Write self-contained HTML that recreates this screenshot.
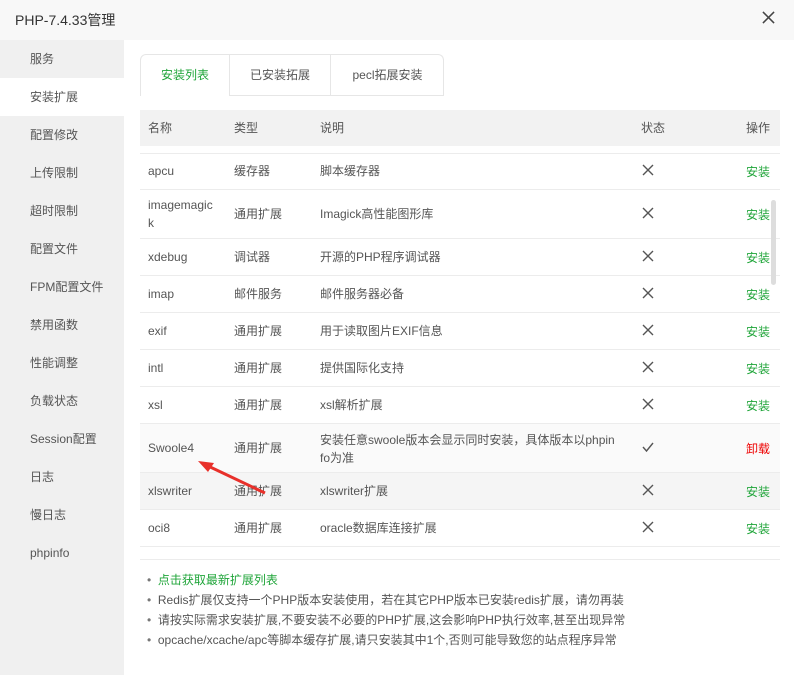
<!DOCTYPE html>
<html><head><meta charset="utf-8"><style>
*{margin:0;padding:0;box-sizing:border-box}
body{width:794px;height:675px;background:#fff;font-family:"Liberation Sans","Noto Sans CJK SC",sans-serif;font-size:12px;color:#555;position:relative;overflow:hidden}
.title{position:absolute;left:0;top:0;width:794px;height:40px;background:#f8f8f8;font-size:14px;color:#333;line-height:40px;padding-left:15px}
.close{position:absolute;left:762px;top:11px;width:13px;height:13px}
.side{position:absolute;left:0;top:40px;width:124px;height:635px;background:#f0f0f0}
.side div{position:absolute;left:0;width:124px;height:38px;line-height:38px;padding-left:30px;color:#555}
.side .act{background:#fff}
.tabs{position:absolute;left:140px;top:54px;width:304px;height:42px;border:1px solid #e6e6e6;border-bottom:none;border-radius:6px 6px 0 0}
.tab{position:absolute;top:0;height:41px;line-height:40px;text-align:center;color:#555;font-size:12px}
.abs{position:absolute}
.hdr{position:absolute;left:140px;top:110px;width:640px;height:36px;background:#f2f2f2}
.line{position:absolute;left:140px;width:640px;height:1px;background:#ececec}
.c{position:absolute;white-space:nowrap;line-height:16px;height:16px}
.c2{line-height:18px;height:36px}
.g{color:#20a53a}.r{color:#e00}
.x{position:absolute;left:642px;width:12px;height:12px}
</style></head><body>
<div class="title">PHP-7.4.33管理</div>
<svg class="close" viewBox="0 0 14 14"><path d="M1 1L13 13M13 1L1 13" stroke="#444" stroke-width="1.6"/></svg>
<div class="side">
<div style="top:0">服务</div>
<div class="act" style="top:38px">安装扩展</div>
<div style="top:76px">配置修改</div>
<div style="top:114px">上传限制</div>
<div style="top:152px">超时限制</div>
<div style="top:190px">配置文件</div>
<div style="top:228px">FPM配置文件</div>
<div style="top:266px">禁用函数</div>
<div style="top:304px">性能调整</div>
<div style="top:342px">负载状态</div>
<div style="top:380px">Session配置</div>
<div style="top:418px">日志</div>
<div style="top:456px">慢日志</div>
<div style="top:494px">phpinfo</div>
</div>
<div class="tabs">
<div class="tab g" style="left:0;width:88px">安装列表</div>
<div class="tab" style="left:88px;width:101px;border-left:1px solid #e6e6e6;border-bottom:1px solid #e6e6e6">已安装拓展</div>
<div class="tab" style="left:189px;width:114px;border-left:1px solid #e6e6e6;border-bottom:1px solid #e6e6e6">pecl拓展安装</div>
</div>
<div class="hdr"></div>
<div class="c" style="left:148px;top:120px">名称</div>
<div class="c" style="left:234px;top:120px">类型</div>
<div class="c" style="left:320px;top:120px">说明</div>
<div class="c" style="left:641px;top:120px">状态</div>
<div class="c" style="left:746px;top:120px">操作</div>
<div class="line" style="top:153px"></div>
<div class="line" style="top:189px"></div>
<div class="line" style="top:238px"></div>
<div class="line" style="top:275px"></div>
<div class="line" style="top:312px"></div>
<div class="line" style="top:349px"></div>
<div class="line" style="top:386px"></div>
<div class="line" style="top:423px"></div>
<div class="abs" style="left:140px;top:424px;width:640px;height:48px;background:#fafafa"></div>
<div class="abs" style="left:140px;top:473px;width:640px;height:36px;background:#f5f5f5"></div>
<div class="line" style="top:472px"></div>
<div class="line" style="top:509px"></div>
<div class="line" style="top:546px"></div>
<div class="line" style="top:559px"></div>
<div class="abs" style="left:771px;top:200px;width:5px;height:85px;background:#ddd;border-radius:3px"></div>

<div class="c" style="left:148px;top:163px">apcu</div><div class="c" style="left:234px;top:163px">缓存器</div><div class="c" style="left:320px;top:163px">脚本缓存器</div><div class="c g" style="left:746px;top:164px">安装</div>
<div class="c c2" style="left:148px;top:196px">imagemagic<br>k</div><div class="c" style="left:234px;top:206px">通用扩展</div><div class="c" style="left:320px;top:206px">Imagick高性能图形库</div><div class="c g" style="left:746px;top:207px">安装</div>
<div class="c" style="left:148px;top:249px">xdebug</div><div class="c" style="left:234px;top:249px">调试器</div><div class="c" style="left:320px;top:249px">开源的PHP程序调试器</div><div class="c g" style="left:746px;top:250px">安装</div>
<div class="c" style="left:148px;top:286px">imap</div><div class="c" style="left:234px;top:286px">邮件服务</div><div class="c" style="left:320px;top:286px">邮件服务器必备</div><div class="c g" style="left:746px;top:287px">安装</div>
<div class="c" style="left:148px;top:323px">exif</div><div class="c" style="left:234px;top:323px">通用扩展</div><div class="c" style="left:320px;top:323px">用于读取图片EXIF信息</div><div class="c g" style="left:746px;top:324px">安装</div>
<div class="c" style="left:148px;top:360px">intl</div><div class="c" style="left:234px;top:360px">通用扩展</div><div class="c" style="left:320px;top:360px">提供国际化支持</div><div class="c g" style="left:746px;top:361px">安装</div>
<div class="c" style="left:148px;top:397px">xsl</div><div class="c" style="left:234px;top:397px">通用扩展</div><div class="c" style="left:320px;top:397px">xsl解析扩展</div><div class="c g" style="left:746px;top:398px">安装</div>
<div class="c" style="left:148px;top:440px">Swoole4</div><div class="c" style="left:234px;top:440px">通用扩展</div><div class="c c2" style="left:320px;top:431px">安装任意swoole版本会显示同时安装，具体版本以phpin<br>fo为准</div><div class="c r" style="left:746px;top:441px">卸载</div>
<div class="c" style="left:148px;top:483px">xlswriter</div><div class="c" style="left:234px;top:483px">通用扩展</div><div class="c" style="left:320px;top:483px">xlswriter扩展</div><div class="c g" style="left:746px;top:484px">安装</div>
<div class="c" style="left:148px;top:520px">oci8</div><div class="c" style="left:234px;top:520px">通用扩展</div><div class="c" style="left:320px;top:520px">oracle数据库连接扩展</div><div class="c g" style="left:746px;top:521px">安装</div>

<svg class="x" style="top:164px" viewBox="0 0 12 12"><path d="M1 1L11 11M11 1L1 11" stroke="#555" stroke-width="1.4"/></svg>
<svg class="x" style="top:207px" viewBox="0 0 12 12"><path d="M1 1L11 11M11 1L1 11" stroke="#555" stroke-width="1.4"/></svg>
<svg class="x" style="top:250px" viewBox="0 0 12 12"><path d="M1 1L11 11M11 1L1 11" stroke="#555" stroke-width="1.4"/></svg>
<svg class="x" style="top:287px" viewBox="0 0 12 12"><path d="M1 1L11 11M11 1L1 11" stroke="#555" stroke-width="1.4"/></svg>
<svg class="x" style="top:324px" viewBox="0 0 12 12"><path d="M1 1L11 11M11 1L1 11" stroke="#555" stroke-width="1.4"/></svg>
<svg class="x" style="top:361px" viewBox="0 0 12 12"><path d="M1 1L11 11M11 1L1 11" stroke="#555" stroke-width="1.4"/></svg>
<svg class="x" style="top:398px" viewBox="0 0 12 12"><path d="M1 1L11 11M11 1L1 11" stroke="#555" stroke-width="1.4"/></svg>
<svg class="x" style="top:441px" viewBox="0 0 12 12"><path d="M1 6L4.5 10L11 2" stroke="#555" stroke-width="1.4" fill="none"/></svg>
<svg class="x" style="top:484px" viewBox="0 0 12 12"><path d="M1 1L11 11M11 1L1 11" stroke="#555" stroke-width="1.4"/></svg>
<svg class="x" style="top:521px" viewBox="0 0 12 12"><path d="M1 1L11 11M11 1L1 11" stroke="#555" stroke-width="1.4"/></svg>

<svg class="abs" style="left:190px;top:455px" width="80" height="40" viewBox="0 0 80 40"><path d="M75 38L16 10" stroke="#e8302a" stroke-width="3"/><path d="M8 6L24 8L18 17Z" fill="#e8302a"/></svg>

<div class="abs" style="left:147px;top:570px;line-height:20px">
<div><span style="color:#777">•</span>&nbsp;&nbsp;<span class="g">点击获取最新扩展列表</span></div>
<div><span style="color:#777">•</span>&nbsp;&nbsp;Redis扩展仅支持一个PHP版本安装使用，若在其它PHP版本已安装redis扩展，请勿再装</div>
<div><span style="color:#777">•</span>&nbsp;&nbsp;请按实际需求安装扩展,不要安装不必要的PHP扩展,这会影响PHP执行效率,甚至出现异常</div>
<div><span style="color:#777">•</span>&nbsp;&nbsp;opcache/xcache/apc等脚本缓存扩展,请只安装其中1个,否则可能导致您的站点程序异常</div>
</div>
</body></html>
